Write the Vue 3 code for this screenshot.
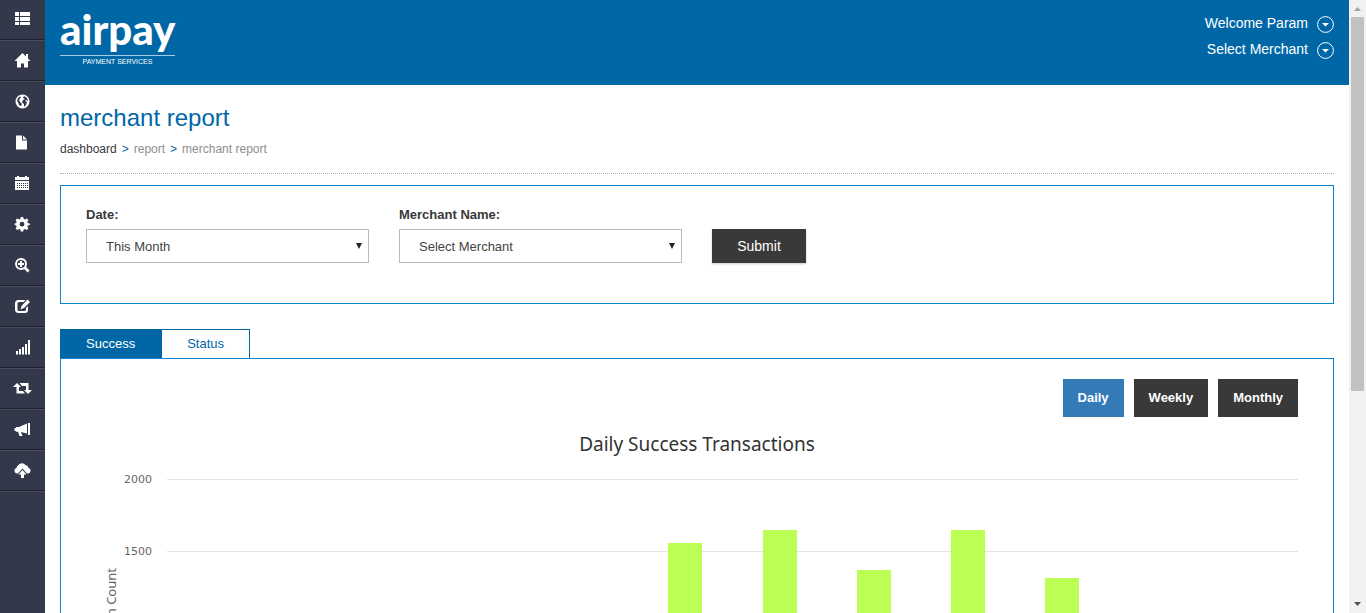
<script setup>
import { ref } from 'vue'

const menu = [
  { name: 'List', d: 'M0 0h4v4H0zM5 0h10v4H5zM0 5h4v4H0zM5 5h10v4H5zM0 10h4v3H0zM5 10h10v3H5z' },
  { name: 'Home', d: 'M7.500 0L-.5 8H2v6.500h4v-4h3v4h4V8h2.500L13 5.500V1h-2v2.500z' },
  { name: 'Globe', d: 'M7.500.5a7 7 0 1 0 0 14a7 7 0 0 0 0-14zM9 2l3 2 1 3-2-1-1 1 2 1-1 3-2 2V10L7 8.500 8 6l2-1-2-1zM5 2.500L6 3 4 6l1 2 2 2-1 2-2-1-1-3-1-1 1-3z' },
  { name: 'Document', d: 'M1 .5h6v5h5v9H1zM8 .5l4 4H8z' },
  { name: 'Calendar', d: 'M0 1h2V0h2v1h6V0h2v1h2v3H0zM0 5h14v9H0zM2 7v1h1V7zm2 0v1h1V7zm2 0v1h1V7zm2 0v1h1V7zm2 0v1h1V7zm2 0v1h1V7zM2 9v1h1V9zm2 0v1h1V9zm2 0v1h1V9zm2 0v1h1V9zm2 0v1h1V9zm2 0v1h1V9zM2 11v1h1v-1zm2 0v1h1v-1zm2 0v1h1v-1zm2 0v1h1v-1zm2 0v1h1v-1zm2 0v1h1v-1z' },
  { name: 'Settings', d: 'M5.800 0h2.400l.5 2 1.200.5 1.800-1.100 1.700 1.700L12.300 4.900l.5 1.100 2 .5v1.500l-2 .4-.5 1.200 1.100 1.800-1.700 1.700-1.800-1.100-1.200.5-.5 2H5.800l-.5-2-1.200-.5-1.800 1.100-1.700-1.700 1.100-1.800-.5-1.200-1.500-.4V6.500l1.500-.5.5-1.100L.6 3.100l1.700-1.700L4.100 2.500l1.200-.5zM7 4.800a2.400 2.400 0 1 0 0 4.800a2.400 2.400 0 0 0 0-4.800z' },
  { name: 'Search', d: 'M6 0a6 6 0 1 0 3.200 11.100l3.400 3.400 2-2-3.400-3.400A6 6 0 0 0 6 0zM6 2a4 4 0 1 1 0 8a4 4 0 0 1 0-8zM5 3h2v2h2v2H7v2H5V7H3V5h2z' },
  { name: 'Edit', d: 'M3.500 1h7L8.500 3H4a1.500 1.500 0 0 0-1.500 1.500v6A1.500 1.500 0 0 0 4 12h5.500a1.500 1.500 0 0 0 1.500-1.500V9l2-2v4a3 3 0 0 1-3 3H3.500a3.500 3.500 0 0 1-3.500-3V4.500A3.500 3.500 0 0 1 3.500 1zM12.500.5l2.500 2.500-6 6-3.500 1.500 1-3.500z' },
  { name: 'Signal', d: 'M1 11h2v3.500H1zM4 9h2v5.500H4zM7 7h2v7.500H7zM10 4h2v10.500h-2zM13 0h2v14.500h-2z' },
  { name: 'Transfer', d: 'M2 2l4 4H4v4h4l2 2.500H1.500V6H-2zM4.500 2h9v7H17l-4 4-4-4h2V5H7z' },
  { name: 'Announcements', d: 'M13 1h2v12h-2zM12 1.500v10L6 10l1.500 4H4.500L3 9.800H1V9H-.500V6H1V5h3z' },
  { name: 'Upload', d: 'M3 10.500H2a2.800 2.800 0 0 1-.5-5.500A3 3 0 0 1 3 2.500A4.500 4.500 0 0 1 10.500 2a3.500 3.500 0 0 1 3 3a2.800 2.800 0 0 1-.5 5.500h-1L7.500 5.500zM7.500 7l4 4.500H9V15H6v-3.500H3.500z' }
]

const date = ref('This Month')
const merchant = ref('Select Merchant')
const period = ref('Daily')
const periods = ['Daily', 'Weekly', 'Monthly']
const axisMax = 2000
const ticks = [2000, 1500]
const values = [0, 0, 0, 0, 0, 1556, 1646, 1368, 1646, 1313, 0, 0]
</script>

<template>
  <div class="page">
    <nav class="sidebar" aria-label="Main">
      <a v-for="item in menu" :key="item.name" href="#" class="side-link" :aria-label="item.name">
        <svg viewBox="0 0 15 15" aria-hidden="true"><path :d="item.d" /></svg>
      </a>
      <div class="side-rest"></div>
    </nav>

    <div class="main">
      <header class="topbar">
        <a href="#" class="brand">
          <span class="brand-name">airpay</span>
          <span class="brand-sub">PAYMENT SERVICES</span>
        </a>
        <div class="account">
          <button type="button" v-for="label in ['Welcome Param', 'Select Merchant']" :key="label" class="account-btn">
            <span>{{ label }}</span>
            <svg viewBox="0 0 17 17" aria-hidden="true">
              <circle cx="8.500" cy="8.500" r="7.900" />
              <path d="M5 7h7l-3.500 3.500z" />
            </svg>
          </button>
        </div>
      </header>

      <main class="content">
        <h1>merchant report</h1>
        <nav class="crumbs" aria-label="Breadcrumb">
          <a href="#">dashboard</a><i>&gt;</i><span>report</span><i>&gt;</i><span>merchant report</span>
        </nav>

        <form class="filters" @submit.prevent>
          <div class="field">
            <label for="date">Date:</label>
            <div class="select-wrap">
              <select id="date" v-model="date"><option>This Month</option></select>
            </div>
          </div>
          <div class="field">
            <label for="merchant">Merchant Name:</label>
            <div class="select-wrap">
              <select id="merchant" v-model="merchant"><option>Select Merchant</option></select>
            </div>
          </div>
          <button type="submit" class="submit">Submit</button>
        </form>

        <div class="tabs" role="tablist">
          <button type="button" role="tab" aria-selected="true" class="tab active">Success</button>
          <button type="button" role="tab" aria-selected="false" class="tab">Status</button>
        </div>

        <section class="panel">
          <div class="periods">
            <button v-for="p in periods" :key="p" type="button" :class="{ on: p === period }" @click="period = p">{{ p }}</button>
          </div>
          <h2>Daily Success Transactions</h2>
          <div class="chart">
            <div class="axis-title">Transaction Count</div>
            <div class="ticks"><span v-for="t in ticks" :key="t">{{ t }}</span></div>
            <div class="plot">
              <div v-for="(v, i) in values" :key="i" class="slot">
                <div class="bar" :style="{ height: (v / axisMax) * 100 + '%' }"></div>
              </div>
            </div>
          </div>
        </section>
      </main>
    </div>

    <div class="scroll" aria-hidden="true">
      <svg viewBox="0 0 17 17"><path class="up" d="M5 11h7L8.500 7z" /></svg>
      <div class="track"><div class="thumb"></div></div>
      <svg viewBox="0 0 17 17"><path class="down" d="M5 6h7L8.500 10z" /></svg>
    </div>
  </div>
</template>

<style>
body {
  overflow: hidden;
}
</style>

<style scoped>
* {
  box-sizing: border-box;
}
.page {
  display: grid;
  grid-template-columns: 45px minmax(0, 1fr) 17px;
  height: 100vh;
  overflow: hidden;
  background: #fff;
  color: #393939;
  font-family: "Liberation Sans", Arial, sans-serif;
  font-size: 13px;
}
button,
select {
  font: inherit;
  margin: 0;
  border-radius: 0;
  cursor: pointer;
}
a {
  text-decoration: none;
}
.sidebar {
  display: flex;
  flex-direction: column;
  background: #33384b;
}
.side-link {
  display: flex;
  flex: none;
  align-items: center;
  justify-content: center;
  height: 41px;
  border-top: 1px solid #494d5e;
  border-bottom: 1px solid #1f222e;
}
.side-link:first-child {
  height: 40px;
  border-top: 0;
}
.side-link svg {
  width: 15px;
  height: 15px;
  overflow: visible;
  fill: #fff;
  fill-rule: evenodd;
}
.side-rest {
  flex: 1;
  border-top: 1px solid #494d5e;
}
.main {
  overflow: hidden;
}
.topbar {
  display: flex;
  justify-content: space-between;
  height: 85px;
  padding: 11px 15px 0;
  background: #0067a7;
}
.brand {
  display: flex;
  flex-direction: column;
  width: 115px;
  color: #fff;
}
.brand-name {
  height: 45px;
  border-bottom: 1px solid #a9cbe1;
  font: 900 42px/36px Lato, sans-serif;
}
.brand-sub {
  font-size: 7px;
  line-height: 12px;
  text-align: center;
}
.account {
  display: flex;
  flex-direction: column;
  align-items: flex-end;
}
.account-btn {
  display: flex;
  gap: 9px;
  align-items: center;
  height: 26px;
  padding: 0;
  border: 0;
  background: none;
  color: #fff;
  font-size: 14px;
}
.account-btn span {
  padding-bottom: 2px;
}
.account-btn svg {
  width: 17px;
  height: 17px;
  fill: #fff;
}
.account-btn circle {
  fill: none;
  stroke: #fff;
}
.content {
  padding: 17px 15px 0;
}
h1 {
  margin: 0;
  color: #0067a7;
  font-size: 24px;
  font-weight: 400;
  line-height: 32px;
}
.crumbs {
  display: flex;
  height: 40px;
  padding-top: 7px;
  border-bottom: 1px dotted #aaa;
  color: #8e8e8e;
  font-size: 12px;
  line-height: 16px;
}
.crumbs a {
  color: #393939;
}
.crumbs i {
  padding: 0 5px;
  color: #0067a7;
  font-style: normal;
}
.filters {
  display: flex;
  gap: 30px;
  height: 119px;
  margin-top: 11px;
  padding: 21px 25px 0;
  border: 1px solid #0d83cf;
}
.field {
  width: 283px;
}
.field label {
  display: block;
  height: 22px;
  font-weight: 700;
  line-height: 16px;
}
.select-wrap {
  position: relative;
}
.select-wrap::after {
  content: "";
  position: absolute;
  top: 14px;
  right: 7px;
  border: solid transparent;
  border-width: 6px 3px 0;
  border-top-color: #222;
  pointer-events: none;
}
select {
  display: block;
  width: 100%;
  height: 34px;
  padding: 0 19px;
  border: 1px solid #bbb;
  background: #fff;
  color: #444;
  appearance: none;
}
.submit {
  width: 94px;
  height: 34px;
  margin-top: 22px;
  border: 0;
  background: #393939;
  box-shadow: 0 1px 2px #ccc;
  color: #fff;
  font-size: 14px;
}
.tabs {
  display: flex;
  height: 29px;
  margin-top: 25px;
}
.tab {
  padding: 0 25px 2px;
  border: 1px solid #0067a7;
  border-bottom: 0;
  border-left: 0;
  background: #fff;
  color: #0067a7;
}
.tab.active {
  padding-right: 26px;
  border-left: 1px solid #0067a7;
  background: #0067a7;
  color: #fff;
}
.panel {
  padding: 20px 35px 0;
  border: 1px solid #0d83cf;
}
.periods {
  display: flex;
  gap: 10px;
  justify-content: flex-end;
}
.periods button {
  height: 38px;
  padding: 0 15px 2px;
  border: 0;
  background: #393939;
  color: #fff;
  font-weight: 700;
}
.periods button.on {
  background: #337ab7;
}
h2 {
  margin: 15px 0 22px;
  color: #333;
  font: 400 19px/25px "Noto Sans", sans-serif;
  text-align: center;
}
.chart {
  display: flex;
  height: 289px;
  color: #666;
  font: 400 11px/16px "DejaVu Sans", sans-serif;
}
.axis-title {
  flex: none;
  align-self: center;
  width: 16px;
  margin-left: 7px;
  font: 400 13px/16px "Noto Sans", sans-serif;
  white-space: nowrap;
  writing-mode: vertical-rl;
  transform: rotate(180deg);
}
.ticks {
  display: flex;
  flex: none;
  flex-direction: column;
  gap: 56px;
  width: 48px;
  margin: -7px 0 0;
  padding-right: 15px;
  text-align: right;
}
.plot {
  display: grid;
  flex: 1;
  grid-template-columns: repeat(12, 1fr);
  background: repeating-linear-gradient(#e3e3e3 0 1px, transparent 1px 72px);
}
.slot {
  display: flex;
  align-items: flex-end;
  justify-content: center;
}
.bar {
  width: 34px;
  background: #bbff54;
}
.scroll {
  display: flex;
  flex-direction: column;
  background: #f1f1f1;
}
.scroll svg {
  flex: none;
  width: 17px;
  height: 17px;
}
.up {
  fill: #a3a3a3;
}
.down {
  fill: #505050;
}
.track {
  flex: 1;
  padding: 0 2px;
}
.thumb {
  height: 374px;
  background: #c1c1c1;
}
</style>
